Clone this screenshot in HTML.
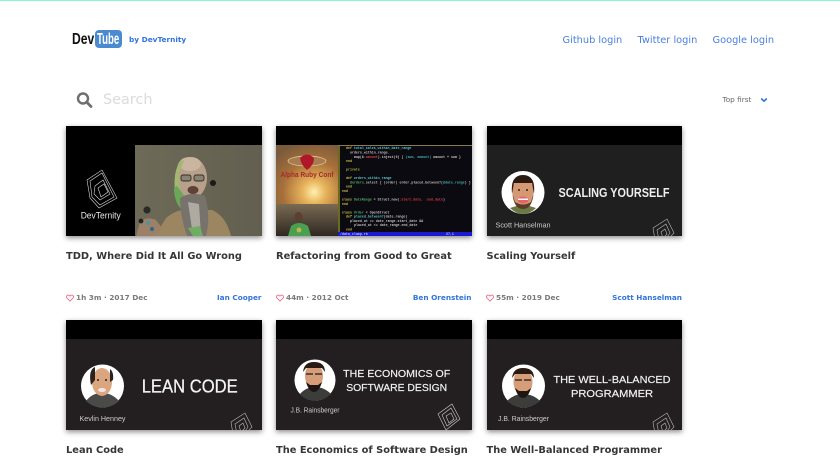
<!DOCTYPE html>
<html><head><meta charset="utf-8">
<style>
html,body{margin:0;padding:0;background:#fff}
body{width:840px;height:472px;overflow:hidden;position:relative;font-family:"DejaVu Sans",sans-serif}
.a{position:absolute;white-space:nowrap}
.bar{left:0;top:0;width:840px;height:1px;background:#8ff5cf}
.link{color:#4a7fe0;font-size:9.8px;line-height:14px;top:34px}
.thumb{position:absolute;width:195.5px;height:110px;box-shadow:0 2px 5px rgba(0,0,0,.45);overflow:hidden;background:#000}
.thumb svg{display:block}
.title{font-weight:bold;font-size:9.85px;color:#363636;line-height:14px}
.meta{font-weight:bold;font-size:7.3px;color:#7a7a7a;line-height:10px}
.auth{font-weight:bold;font-size:7.3px;color:#3273dc;line-height:10px;text-align:right;width:120px}
.hrt{position:absolute}
svg text{font-family:"Liberation Sans",sans-serif}
svg text.c{font-family:"Liberation Mono",monospace;font-size:3.3px;font-weight:bold}
</style></head>
<body>
<div class="a bar"></div>

<!-- logo -->
<div class="a" style="left:72px;top:30.5px;font:bold 16px/17px 'Liberation Sans',sans-serif;color:#111;transform:scaleX(.76);transform-origin:left">Dev</div>
<div class="a" style="left:95px;top:29.5px;width:27px;height:18px;background:#4a8ad0;border-radius:4px"></div>
<div class="a" style="left:97px;top:30.5px;font:bold 16px/17px 'Liberation Sans',sans-serif;color:#fff;transform:scaleX(.6);transform-origin:left">Tube</div>
<div class="a" style="left:129px;top:34px;font-weight:bold;font-size:7.35px;line-height:11px;color:#3273dc">by DevTernity</div>

<div class="a link" style="left:562.5px">Github login</div>
<div class="a link" style="left:637.5px">Twitter login</div>
<div class="a link" style="left:712.5px">Google login</div>

<!-- search -->
<svg class="a" style="left:76px;top:91px" width="17" height="17" viewBox="0 0 17 17"><circle cx="7" cy="7.5" r="5" fill="none" stroke="#6e6e6e" stroke-width="2.4"/><path d="M10.8 11.3L15 15.5" stroke="#6e6e6e" stroke-width="2.8" stroke-linecap="round"/></svg>
<div class="a" style="left:103px;top:91px;font-size:14.4px;line-height:19px;color:#dbdbdb">Search</div>
<div class="a" style="left:722.5px;top:95px;font-size:7.3px;line-height:10px;color:#666">Top first</div>
<svg class="a" style="left:760px;top:97px" width="8" height="6" viewBox="0 0 8 6"><path d="M1.2 1.5L4 4.2L6.8 1.5" fill="none" stroke="#3273dc" stroke-width="1.6"/></svg>

<!-- Card 1 -->
<div class="thumb" style="left:66px;top:126px">
<svg width="196" height="110" viewBox="0 0 196 110">
<defs><linearGradient id="ph" x1="0" y1="0" x2="1" y2="0"><stop offset="0" stop-color="#6e6a58"/><stop offset="1" stop-color="#635f50"/></linearGradient></defs>
<rect width="196" height="110" fill="#000"/>
<rect x="69" y="19" width="127" height="91" fill="url(#ph)"/>
<path d="M89 110L100 92Q110 84 118 84L146 84Q160 90 165 110Z" fill="#9c8661"/>
<path d="M69 110L74 104L90 110Z" fill="#3f5a30"/>
<ellipse cx="125" cy="52" rx="16" ry="21" fill="#b8a08a"/>
<ellipse cx="124" cy="38" rx="11" ry="7" fill="#c9b5a0"/>
<path d="M113 36Q107 50 109 64L114 68L113 48L118 34Z" fill="#a3b672"/>
<path d="M108 62Q108 76 116 84L120 72L111 60Z" fill="#6aa858"/>
<rect x="115" y="49" width="10" height="6" rx="2" fill="#8a8272" stroke="#2f2f2a" stroke-width=".9"/>
<rect x="128" y="49" width="10" height="6" rx="2" fill="#8a8272" stroke="#2f2f2a" stroke-width=".9"/>
<path d="M114 72Q125 65 139 70Q145 90 140 110L121 110Q114 90 114 72Z" fill="#77736c"/>
<path d="M122 76L127 110L135 110L133 78Z" fill="#aeaaa2"/>
<path d="M122 102L127 110L137 110L134 100Z" fill="#6fae62"/>
<ellipse cx="127" cy="64" rx="5.500" ry="4" fill="#5e4238"/>
<circle cx="147" cy="57" r="3" fill="#1a1a1a"/>
<path d="M70 110L74 96Q80 90 90 94L96 102L90 110Z" fill="#9c8067"/>
<circle cx="81" cy="84" r="3.600" fill="#2a2a2a"/>
<circle cx="75" cy="95" r="2.400" fill="#222"/><circle cx="82" cy="97" r="2" fill="#4a95a5"/><circle cx="86" cy="103" r="2" fill="#2c6a80"/>
<g fill="none" stroke="#d8d8d8" stroke-width=".6">
<path d="M21 54L36 44L51 72L33 82L24 72Z"/><path d="M24 55L36 47L48 71L34 79L26 71Z"/><path d="M29 60L37 54L44 68L34 74L28 68Z"/><path d="M32 62L38 58L42 66L35 71Z"/>
</g>
<text x="34.700" y="92.500" fill="#e8e8e8" font-size="9" text-anchor="middle" textLength="40" lengthAdjust="spacingAndGlyphs">DevTernity</text>
</svg></div>
<svg class="hrt" style="left:65.5px;top:293.5px" width="8" height="8" viewBox="0 0 9 9"><path d="M4.5 8L1 4.500Q0 3 1 1.800Q2.800.4 4.500 2.300Q6.200.4 8 1.800Q9 3 8 4.500Z" fill="none" stroke="#f36a8d" stroke-width="1"/></svg>
<div class="a title" style="left:66px;top:250px">TDD, Where Did It All Go Wrong</div>
<div class="a meta" style="left:76px;top:293px">1h 3m · 2017 Dec</div>
<div class="a auth" style="left:141.5px;top:293px">Ian Cooper</div>

<!-- Card 2 -->
<div class="thumb" style="left:276px;top:126px">
<svg width="196" height="110" viewBox="0 0 196 110">
<defs><radialGradient id="sun" gradientUnits="userSpaceOnUse" cx="38" cy="66" r="52"><stop offset="0" stop-color="#fff0b0"/><stop offset=".22" stop-color="#e8b45c"/><stop offset=".6" stop-color="#a8703a"/><stop offset="1" stop-color="#7a5a3c"/></radialGradient>
<linearGradient id="pp" x1="0" y1="0" x2="0" y2="1"><stop offset="0" stop-color="#7a6a52"/><stop offset="1" stop-color="#2e2822"/></linearGradient></defs>
<rect width="196" height="110" fill="#000"/>
<rect y="19" width="63" height="59" fill="url(#sun)"/>
<rect y="78" width="63" height="32" fill="url(#pp)"/>
<ellipse cx="31" cy="35" rx="19" ry="5" fill="#a87c50" stroke="#e8d0a0" stroke-width=".7"/>
<path d="M24 32Q31 25 38 32Q38 39 31 44Q25 39 24 32Z" fill="#b0182a"/>
<text x="31" y="51" font-size="7.500" font-weight="bold" fill="#a82a2a" text-anchor="middle" textLength="53" lengthAdjust="spacingAndGlyphs">Alpha Ruby Conf</text>
<ellipse cx="22.500" cy="91" rx="4" ry="5" fill="#5b3f30"/>
<path d="M12 110L15 100Q23 94 32 100L35 110Z" fill="#4aa050"/>
<circle cx="23" cy="104" r="2.400" fill="#c9b24a"/>
<rect x="62" y="19" width="134" height="91" fill="#0a0a10"/>
<rect x="62" y="106" width="134" height="4" fill="#1a1ad0"/>
<rect x="62" y="19" width="2" height="87" fill="#6a6a20"/>
<rect x="62" y="19" width="134" height="1" fill="#8a7a50"/>
<text class="c" x="70" y="23" fill="#c8c040">def <tspan fill="#5cc8c8">total_sales_within_date_range</tspan></text>
<text class="c" x="74" y="27.500" fill="#c0c0c0">orders_within_range.</text>
<text class="c" x="78" y="32" fill="#c0c0c0">map(&amp;<tspan fill="#d04040">:amount</tspan>).inject(0) { <tspan fill="#40b0b0">|sum, amount|</tspan> amount + sum }</text>
<text class="c" x="70" y="36" fill="#c8c040">end</text>
<text class="c" x="70" y="44.500" fill="#a8b030">private</text>
<text class="c" x="70" y="53" fill="#c8c040">def <tspan fill="#5cc8c8">orders_within_range</tspan></text>
<text class="c" x="74" y="57.500" fill="#c0c0c0"><tspan fill="#50b060">@orders</tspan>.select { |order| order.placed_between?(<tspan fill="#40b0b0">@date_range</tspan>) }</text>
<text class="c" x="70" y="61.500" fill="#c8c040">end</text>
<text class="c" x="66" y="66" fill="#c8c040">end</text>
<text class="c" x="66" y="74.500" fill="#c8c040">class <tspan fill="#50b060">DateRange</tspan> <tspan fill="#c0c0c0">= Struct.new(</tspan><tspan fill="#d04040">:start_date,  :end_date</tspan><tspan fill="#c0c0c0">)</tspan></text>
<text class="c" x="66" y="79" fill="#c8c040">end</text>
<text class="c" x="66" y="87.500" fill="#c8c040">class <tspan fill="#50b060">Order</tspan> <tspan fill="#c0c0c0">&lt; OpenStruct</tspan></text>
<text class="c" x="70" y="91.500" fill="#c8c040">def <tspan fill="#5cc8c8">placed_between?</tspan><tspan fill="#c0c0c0">(date_range)</tspan></text>
<text class="c" x="74" y="96" fill="#c0c0c0">placed_at &gt;= date_range.start_date &amp;&amp;</text>
<text class="c" x="78" y="100" fill="#c0c0c0">placed_at &lt;= date_range.end_date</text>
<text class="c" x="70" y="104.500" fill="#c8c040">end</text>
<text class="c" x="64" y="109.200" fill="#c0c0e0">/data_clump.rb</text>
<text class="c" x="170" y="109.200" fill="#c0c0e0">27,1</text>
</svg></div>
<svg class="hrt" style="left:275.5px;top:293.5px" width="8" height="8" viewBox="0 0 9 9"><path d="M4.500 8L1 4.500Q0 3 1 1.800Q2.800.4 4.500 2.300Q6.200.4 8 1.800Q9 3 8 4.500Z" fill="none" stroke="#f36a8d" stroke-width="1"/></svg>
<div class="a title" style="left:276px;top:250px">Refactoring from Good to Great</div>
<div class="a meta" style="left:286px;top:293px">44m · 2012 Oct</div>
<div class="a auth" style="left:351.5px;top:293px">Ben Orenstein</div>

<!-- Card 3 -->
<div class="thumb" style="left:486.5px;top:126px">
<svg width="196" height="110" viewBox="0 0 196 110">
<rect width="196" height="110" fill="#1f1f1f"/><rect width="196" height="19" fill="#000"/>
<circle cx="36" cy="66.500" r="21.500" fill="#fff"/>
<path d="M23 82L36 78L49 82Q43 88 36 88Q29 88 23 82Z" fill="#6b7a44"/>
<ellipse cx="36" cy="66" rx="10.500" ry="16" fill="#d69873"/>
<path d="M25 68Q23 49 36 49Q49 49 47 68L45 57L27 57Z" fill="#2b1a12"/>
<path d="M25.500 68Q27 83 36 83Q45 83 46.500 68L44 76Q36 81 28 76Z" fill="#5a3a28"/>
<ellipse cx="36" cy="74" rx="5.500" ry="3.500" fill="#e8606a"/>
<path d="M31 72.500H41V74H31Z" fill="#fff"/>
<circle cx="32" cy="64" r="1" fill="#222"/><circle cx="40" cy="64" r="1" fill="#222"/>
<text x="127" y="71" font-size="12.500" font-weight="bold" fill="#eee" text-anchor="middle" textLength="111" lengthAdjust="spacingAndGlyphs">SCALING YOURSELF</text>
<text x="36" y="101.500" font-size="7.500" fill="#ccc" text-anchor="middle" textLength="55" lengthAdjust="spacingAndGlyphs">Scott Hanselman</text>
<g fill="none" stroke="#bbb" stroke-width=".6" transform="translate(-2,4)"><path d="M168 98L182 89L189 103L182 110H170Z"/><path d="M172 100L181 94L185 103L180 110H174Z"/><path d="M176 102L180 99L182 104L178 108Z"/></g>
</svg></div>
<svg class="hrt" style="left:486px;top:293.5px" width="8" height="8" viewBox="0 0 9 9"><path d="M4.500 8L1 4.500Q0 3 1 1.800Q2.800.4 4.500 2.300Q6.200.4 8 1.800Q9 3 8 4.500Z" fill="none" stroke="#f36a8d" stroke-width="1"/></svg>
<div class="a title" style="left:486.5px;top:250px">Scaling Yourself</div>
<div class="a meta" style="left:496px;top:293px">55m · 2019 Dec</div>
<div class="a auth" style="left:562px;top:293px">Scott Hanselman</div>

<!-- Card 4 -->
<div class="thumb" style="left:66px;top:320px">
<svg width="196" height="110" viewBox="0 0 196 110">
<rect width="196" height="110" fill="#231f20"/><rect width="196" height="19" fill="#000"/>
<circle cx="36.500" cy="66" r="21.500" fill="#fff"/>
<path d="M20 81Q26 73 36 73Q46 73 53 81Q46 87.500 36.500 87.500Q27 87.500 20 81Z" fill="#4a4a48"/>
<ellipse cx="36" cy="62" rx="10" ry="14" fill="#dba67f"/>
<path d="M25 65Q22 50 29 47L29 60ZM47 60Q48 52 44 49L44 62Z" fill="#2a2320"/>
<ellipse cx="36" cy="70" rx="4" ry="2" fill="#f0e6df"/>
<circle cx="32" cy="60" r="1" fill="#222"/><circle cx="40" cy="60" r="1" fill="#222"/>
<text x="123.700" y="72.500" font-size="18" fill="#f4f4f4" stroke="#f4f4f4" stroke-width=".25" text-anchor="middle" textLength="96" lengthAdjust="spacingAndGlyphs">LEAN CODE</text>
<text x="36.500" y="101" font-size="7.500" fill="#ccc" text-anchor="middle" textLength="46" lengthAdjust="spacingAndGlyphs">Kevlin Henney</text>
<g fill="none" stroke="#bbb" stroke-width=".6" transform="translate(-2,4)"><path d="M167 98L181 89L188 103L181 110H169Z"/><path d="M171 100L180 94L184 103L179 110H173Z"/><path d="M175 102L179 99L181 104L177 108Z"/></g>
</svg></div>
<div class="a title" style="left:66px;top:444px">Lean Code</div>

<!-- Card 5 -->
<div class="thumb" style="left:276px;top:320px">
<svg width="196" height="110" viewBox="0 0 196 110">
<rect width="196" height="110" fill="#231f20"/><rect width="196" height="19" fill="#000"/>
<circle cx="39" cy="60" r="20.500" fill="#fff"/>
<path d="M24 74Q30 67 39 67Q48 67 55 74Q48 80.500 39 80.500Q30 80.500 24 74Z" fill="#3c3c3a"/>
<ellipse cx="38" cy="56" rx="9" ry="13" fill="#d69d78"/>
<path d="M27 52Q28 42 38 42Q49 42 49 52L46 48L30 48Z" fill="#2a1a14"/>
<path d="M30 62Q33 72 38 72Q43 72 46 62L42 65L34 65Z" fill="#1e1612"/>
<path d="M30 54H37M39 54H46" stroke="#333" stroke-width="1.600"/>
<text x="120.700" y="57" font-size="10.500" fill="#f0f0f0" stroke="#f0f0f0" stroke-width=".2" text-anchor="middle" textLength="107" lengthAdjust="spacingAndGlyphs">THE ECONOMICS OF</text>
<text x="120.700" y="71" font-size="10.500" fill="#f0f0f0" stroke="#f0f0f0" stroke-width=".2" text-anchor="middle" textLength="101" lengthAdjust="spacingAndGlyphs">SOFTWARE DESIGN</text>
<text x="39" y="92.500" font-size="7.500" fill="#ccc" text-anchor="middle" textLength="49" lengthAdjust="spacingAndGlyphs">J.B. Rainsberger</text>
<g fill="none" stroke="#ccc" stroke-width=".6" transform="translate(-2,5)"><path d="M164 89L178 79L186 94L172 105Z"/><path d="M168 90L177 83L183 94L173 101Z"/><path d="M172 91L177 88L180 94L175 98Z"/></g>
</svg></div>
<div class="a title" style="left:276px;top:444px">The Economics of Software Design</div>

<!-- Card 6 -->
<div class="thumb" style="left:486.5px;top:320px">
<svg width="196" height="110" viewBox="0 0 196 110">
<rect width="196" height="110" fill="#231f20"/><rect width="196" height="19" fill="#000"/>
<circle cx="36.500" cy="66" r="21.500" fill="#fff"/>
<path d="M20 81Q27 74 36 74Q46 74 53 81Q46 87.500 36.500 87.500Q27 87.500 20 81Z" fill="#3c3c3a"/>
<ellipse cx="36" cy="62" rx="9.500" ry="13.500" fill="#d69d78"/>
<path d="M25 58Q26 48 36 48Q47 48 47 58L44 54L28 54Z" fill="#2a1a14"/>
<path d="M28 68Q31 78 36 78Q41 78 44 68L40 71L32 71Z" fill="#1e1612"/>
<path d="M28 60H35M37 60H44" stroke="#333" stroke-width="1.600"/>
<text x="125" y="63" font-size="10.500" fill="#f0f0f0" stroke="#f0f0f0" stroke-width=".2" text-anchor="middle" textLength="117" lengthAdjust="spacingAndGlyphs">THE WELL-BALANCED</text>
<text x="125" y="77" font-size="10.500" fill="#f0f0f0" stroke="#f0f0f0" stroke-width=".2" text-anchor="middle" textLength="82" lengthAdjust="spacingAndGlyphs">PROGRAMMER</text>
<text x="36.500" y="101" font-size="7.500" fill="#ccc" text-anchor="middle" textLength="51" lengthAdjust="spacingAndGlyphs">J.B. Rainsberger</text>
<g fill="none" stroke="#bbb" stroke-width=".6" transform="translate(-2,4)"><path d="M168 98L182 89L189 103L182 110H170Z"/><path d="M172 100L181 94L185 103L180 110H174Z"/><path d="M176 102L180 99L182 104L178 108Z"/></g>
</svg></div>
<div class="a title" style="left:486.5px;top:444px">The Well-Balanced Programmer</div>
</body></html>
